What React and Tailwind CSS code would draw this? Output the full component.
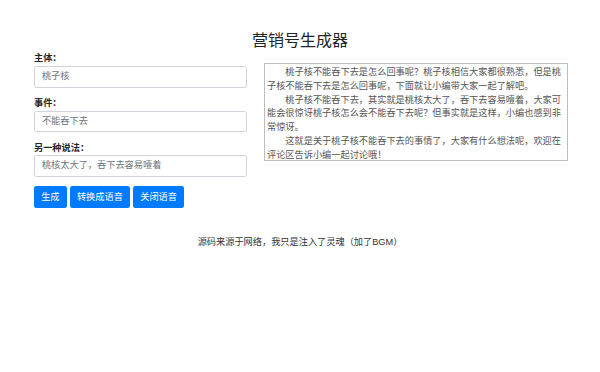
import React from "react";

const FONT = { fontFamily: '"Liberation Sans", "Noto Sans CJK SC", sans-serif' };

function Field({ label, value }) {
  return (
    <div className="mb-[9.2px]">
      <div className="text-[9.2px] leading-[13.8px] font-bold text-[#212529]">{label}</div>
      <div className="h-[21.85px] w-[213px] border border-[#ced4da] rounded-[2.3px] bg-white px-[6.9px] flex items-center text-[9.2px] text-[#6c757d]">
        {value}
      </div>
    </div>
  );
}

function Btn({ children }) {
  return (
    <div className="h-[21.85px] px-[7.2px] rounded-[2.3px] bg-[#007bff] text-white text-[9.2px] flex items-center">
      {children}
    </div>
  );
}

export default function App() {
  const text =
    "\u3000\u3000桃子核不能吞下去是怎么回事呢？桃子核相信大家都很熟悉，但是桃子核不能吞下去是怎么回事呢，下面就让小编带大家一起了解吧。\n" +
    "\u3000\u3000桃子核不能吞下去，其实就是桃核太大了，吞下去容易噎着，大家可能会很惊讶桃子核怎么会不能吞下去呢？但事实就是这样，小编也感到非常惊讶。\n" +
    "\u3000\u3000这就是关于桃子核不能吞下去的事情了，大家有什么想法呢，欢迎在评论区告诉小编一起讨论哦！";
  return (
    <div className="w-[600px] h-[372px] bg-white pt-[31px]" style={FONT}>
      <div className="text-center text-[16px] leading-[19px] text-[#212529]">营销号生成器</div>
      <div className="flex pl-[34px] mt-[2px]">
        <div className="w-[213px]">
          <Field label="主体：" value="桃子核" />
          <Field label="事件：" value="不能吞下去" />
          <Field label="另一种说法：" value="桃核太大了，吞下去容易噎着" />
          <div className="flex gap-[3px]">
            <Btn>生成</Btn>
            <Btn>转换成语音</Btn>
            <Btn>关闭语音</Btn>
          </div>
        </div>
        <div className="ml-[17px] mt-[11px] w-[304px] h-[98px] border border-[#bdbdbd] px-[2px] pt-[2px] overflow-hidden whitespace-pre-wrap text-[9.2px] leading-[13.8px] text-[#555]">
          {text}
        </div>
      </div>
      <div className="text-center text-[9.2px] leading-[13.8px] text-[#333] mt-[28px]">
        源码来源于网络，我只是注入了灵魂（加了BGM）
      </div>
    </div>
  );
}
